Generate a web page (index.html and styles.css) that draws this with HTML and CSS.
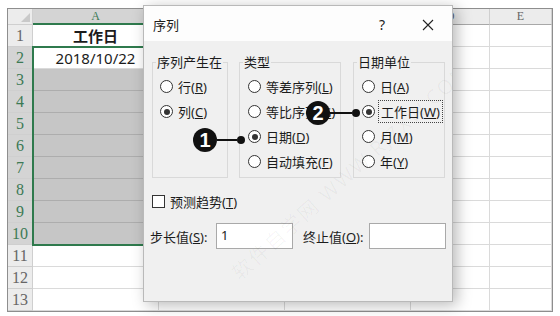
FILE: index.html
```html
<!DOCTYPE html>
<html lang="zh-CN">
<head>
  <meta charset="UTF-8">
  <title>序列</title>
  <link rel="stylesheet" href="styles.css">
</head>
<body>
  <div class="sheet">
    <div class="hdr corner"></div>
    <div class="hdr col sel">A</div>
    <div class="hdr col">B</div>
    <div class="hdr col">C</div>
    <div class="hdr col">D</div>
    <div class="hdr col">E</div>

    <div class="hdr row">1</div><div class="c title-cell">工作日</div><div class="c"></div><div class="c"></div><div class="c"></div><div class="c"></div>
    <div class="hdr row sel">2</div><div class="c date-cell">2018/10/22</div><div class="c"></div><div class="c"></div><div class="c"></div><div class="c"></div>
    <div class="hdr row sel">3</div><div class="c picked"></div><div class="c"></div><div class="c"></div><div class="c"></div><div class="c"></div>
    <div class="hdr row sel">4</div><div class="c picked"></div><div class="c"></div><div class="c"></div><div class="c"></div><div class="c"></div>
    <div class="hdr row sel">5</div><div class="c picked"></div><div class="c"></div><div class="c"></div><div class="c"></div><div class="c"></div>
    <div class="hdr row sel">6</div><div class="c picked"></div><div class="c"></div><div class="c"></div><div class="c"></div><div class="c"></div>
    <div class="hdr row sel">7</div><div class="c picked"></div><div class="c"></div><div class="c"></div><div class="c"></div><div class="c"></div>
    <div class="hdr row sel">8</div><div class="c picked"></div><div class="c"></div><div class="c"></div><div class="c"></div><div class="c"></div>
    <div class="hdr row sel">9</div><div class="c picked"></div><div class="c"></div><div class="c"></div><div class="c"></div><div class="c"></div>
    <div class="hdr row sel">10</div><div class="c picked"></div><div class="c"></div><div class="c"></div><div class="c"></div><div class="c"></div>
    <div class="hdr row">11</div><div class="c"></div><div class="c"></div><div class="c"></div><div class="c"></div><div class="c"></div>
    <div class="hdr row">12</div><div class="c"></div><div class="c"></div><div class="c"></div><div class="c"></div><div class="c"></div>
    <div class="hdr row">13</div><div class="c"></div><div class="c"></div><div class="c"></div><div class="c"></div><div class="c"></div>

    <div class="selection"></div>
  </div>

  <div class="dialog">
    <div class="dlg-title">
      <span class="dlg-name">序列</span>
      <span class="help">?</span>
      <span class="close">
        <svg width="12" height="12" viewBox="0 0 12 12"><path d="M1 1 L11 11 M11 1 L1 11" stroke="#222" stroke-width="1.1" fill="none"/></svg>
      </span>
    </div>

    <div class="dlg-body">
      <div class="groups">
        <fieldset class="group g1">
          <legend>序列产生在</legend>
          <div class="opts">
            <div class="opt"><span class="radio"></span><span>行(<u>R</u>)</span></div>
            <div class="opt"><span class="radio on"></span><span>列(<u>C</u>)</span></div>
          </div>
        </fieldset>
        <fieldset class="group g2">
          <legend>类型</legend>
          <div class="opts">
            <div class="opt"><span class="radio"></span><span>等差序列(<u>L</u>)</span></div>
            <div class="opt"><span class="radio"></span><span>等比序列(<u>G</u>)</span></div>
            <div class="opt"><span class="radio on"></span><span>日期(<u>D</u>)</span></div>
            <div class="opt"><span class="radio"></span><span>自动填充(<u>F</u>)</span></div>
          </div>
        </fieldset>
        <fieldset class="group g3">
          <legend>日期单位</legend>
          <div class="opts">
            <div class="opt"><span class="radio"></span><span>日(<u>A</u>)</span></div>
            <div class="opt"><span class="radio on"></span><span class="focus">工作日(<u>W</u>)</span></div>
            <div class="opt"><span class="radio"></span><span>月(<u>M</u>)</span></div>
            <div class="opt"><span class="radio"></span><span>年(<u>Y</u>)</span></div>
          </div>
        </fieldset>
      </div>

      <div class="trend"><span class="check"></span><span>预测趋势(<u>T</u>)</span></div>

      <div class="steps">
        <label class="step-label">步长值(<u>S</u>):</label>
        <div class="field">1</div>
        <label class="step-label stop">终止值(<u>O</u>):</label>
        <div class="field"></div>
      </div>
    </div>

    <div class="marker m1"><span class="num">1</span><span class="line"></span><span class="dot"></span></div>
    <div class="marker m2"><span class="num">2</span><span class="line"></span><span class="dot"></span></div>

    <div class="watermark">软件自学网 WWW.RJZXW.COM</div>
  </div>
</body>
</html>
```

FILE: styles.css
```css
body {
  margin: 0;
  background: #fff;
  font-family: "Noto Sans", "Noto Sans CJK SC", sans-serif;
  color: #1c1c1c;
}

/* spreadsheet */
.sheet {
  display: grid;
  grid-template-columns: 25px 126px 126px 126px 79px 62px;
  grid-template-rows: 16px repeat(13, 22px);
  width: 544px;
  margin: 8px 0 0 7px;
  border: 1px solid #8e8e8e;
  position: relative;
}
.hdr {
  background: #ececec;
  border-right: 1px solid #cfcfcf;
  border-bottom: 1px solid #cfcfcf;
  box-sizing: border-box;
  color: #666;
  font-family: "Liberation Serif", serif;
  display: flex;
  align-items: center;
  justify-content: center;
}
.corner {
  position: relative;
}
.corner::after {
  content: "";
  position: absolute;
  right: 2px;
  bottom: 2px;
  border-left: 9px solid transparent;
  border-bottom: 9px solid #c9c9c9;
}
.col {
  font-size: 12px;
  border-bottom: 1px solid #a8a8a8;
}
.col.sel {
  background: #d4d4d4;
  color: #3c7a55;
  border-bottom: 2px solid #2f7a4d;
}
.row {
  font-size: 16px;
}
.row.sel {
  background: #d4d4d4;
  color: #3c7a55;
}
.c {
  border-right: 1px solid #dadada;
  border-bottom: 1px solid #dadada;
  box-sizing: border-box;
  font-size: 15px;
  display: flex;
  align-items: center;
  justify-content: center;
}
.title-cell {
  font-weight: bold;
}
.picked {
  background: #c6c6c6;
  border-bottom-color: #adadad;
}
.selection {
  position: absolute;
  left: 24px;
  top: 37px;
  width: 127px;
  height: 200px;
  border: 2px solid #2f7a4d;
  box-sizing: border-box;
}

/* dialog */
.dialog {
  position: absolute;
  left: 143px;
  top: 5px;
  width: 310px;
  height: 297px;
  background: #f0f0f0;
  border: 1px solid #b9b9b9;
  box-sizing: border-box;
  box-shadow: 4px 3px 14px rgba(0,0,0,0.28);
  font-size: 13px;
  overflow: hidden;
}
.dlg-title {
  height: 35px;
  background: #fdfdfd;
  display: flex;
  align-items: center;
  padding: 2px 0 0 9px;
  box-sizing: border-box;
}
.dlg-name {
  flex: 1;
  font-size: 13px;
}
.help {
  width: 20px;
  font-size: 14px;
  margin-right: 23px;
}
.close {
  width: 30px;
  display: flex;
  align-items: center;
}
.dlg-body {
  padding: 13px 0 0 8px;
}
.groups {
  display: flex;
  gap: 11px;
}
.group {
  margin: 0;
  padding: 0;
  min-width: 0;
  height: 124px;
  box-sizing: border-box;
  border: 1px solid #d9d9d9;
}
.group legend {
  margin-left: 3px;
  padding: 0 1px;
  line-height: 16px;
  font-size: 13px;
}
.g1 { width: 76px; }
.g2 { width: 102px; }
.g3 { width: 92px; margin-left: 1px; }
.opts {
  padding: 4px 0 0 7px;
}
.g2 .opts, .g3 .opts {
  padding-left: 8px;
}
.opt {
  height: 25px;
  display: flex;
  align-items: center;
  gap: 5px;
  white-space: nowrap;
}
.radio {
  width: 11px;
  height: 11px;
  border: 1px solid #333;
  border-radius: 50%;
  background: #fff;
  position: relative;
  flex: none;
}
.radio.on::after {
  content: "";
  position: absolute;
  left: 2.5px;
  top: 2.5px;
  width: 6px;
  height: 6px;
  border-radius: 50%;
  background: #333;
}
.focus {
  outline: 1px dotted #444;
  outline-offset: 1px;
  padding: 0 1px;
}
.trend {
  display: flex;
  align-items: center;
  gap: 5px;
  margin-top: 13px;
  height: 20px;
}
.check {
  width: 11px;
  height: 11px;
  border: 1px solid #333;
  background: #fff;
}
.steps {
  display: flex;
  align-items: center;
  margin: 12px 0 0 -2px;
}
.step-label {
  width: 66px;
}
.step-label.stop {
  margin-left: 10px;
}
.field {
  width: 77px;
  height: 26px;
  box-sizing: border-box;
  background: #fff;
  border: 1px solid #a9a9a9;
  padding: 2px 4px;
  font-size: 13px;
}

/* callouts */
.marker {
  position: absolute;
  display: flex;
  align-items: center;
}
.m1 { left: 49px; top: 122px; }
.m2 { left: 162px; top: 95px; }
.num {
  width: 24px;
  height: 24px;
  border-radius: 50%;
  background: #111;
  color: #fff;
  font-family: "Liberation Sans", sans-serif;
  font-size: 20px;
  font-weight: bold;
  display: flex;
  align-items: center;
  justify-content: center;
}
.line {
  width: 20px;
  height: 2px;
  background: #111;
}
.m2 .line { width: 22px; }
.dot {
  width: 8px;
  height: 8px;
  border-radius: 50%;
  background: #111;
}
.watermark {
  position: absolute;
  left: 50px;
  top: 150px;
  transform: rotate(-42deg);
  font-size: 20px;
  letter-spacing: 2px;
  color: rgba(0,0,0,0.035);
  white-space: nowrap;
}
```
